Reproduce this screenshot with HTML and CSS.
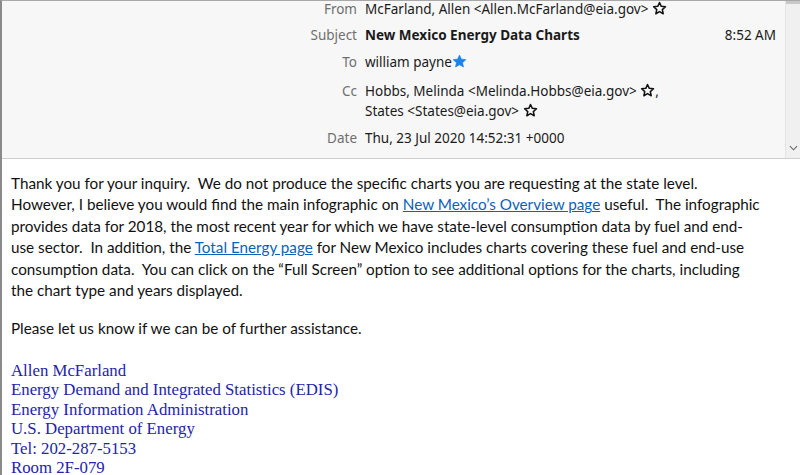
FILE: index.html
```html
<!DOCTYPE html>
<html>
<head>
<meta charset="utf-8">
<link rel="stylesheet" href="styles.css">
</head>
<body>
<div class="frame">
  <header class="head">
    <div class="fields">
      <div class="row r-from"><span class="lbl">From</span><span class="val">McFarland, Allen &lt;Allen.McFarland@eia.gov&gt; <svg class="star" viewBox="0 0 16 16"><path d="M8 1.6l1.9 4.1 4.5.5-3.4 3 1 4.4L8 11.3l-3.9 2.3 1-4.4-3.4-3 4.5-.5z" fill="none" stroke="#111" stroke-width="1.6" stroke-linejoin="round"/></svg></span></div>
      <div class="row r-subj"><span class="lbl">Subject</span><span class="val subj">New Mexico Energy Data Charts</span><span class="time">8:52 AM</span></div>
      <div class="row r-to"><span class="lbl">To</span><span class="val">william payne<svg class="star" viewBox="0 0 16 16"><path d="M8 1.2l2 4.3 4.7.5-3.5 3.2 1 4.6L8 11.4l-4.2 2.4 1-4.6L1.3 6l4.7-.5z" fill="#1a82e8" stroke="#1a82e8" stroke-width="0.8" stroke-linejoin="round"/></svg></span></div>
      <div class="row r-cc"><span class="lbl">Cc</span><span class="val">Hobbs, Melinda &lt;Melinda.Hobbs@eia.gov&gt; <svg class="star" viewBox="0 0 16 16"><path d="M8 1.6l1.9 4.1 4.5.5-3.4 3 1 4.4L8 11.3l-3.9 2.3 1-4.4-3.4-3 4.5-.5z" fill="none" stroke="#111" stroke-width="1.6" stroke-linejoin="round"/></svg>,<br>States &lt;States@eia.gov&gt; <svg class="star" viewBox="0 0 16 16"><path d="M8 1.6l1.9 4.1 4.5.5-3.4 3 1 4.4L8 11.3l-3.9 2.3 1-4.4-3.4-3 4.5-.5z" fill="none" stroke="#111" stroke-width="1.6" stroke-linejoin="round"/></svg></span></div>
      <div class="row r-date"><span class="lbl">Date</span><span class="val">Thu, 23 Jul 2020 14:52:31 +0000</span></div>
    </div>
    <div class="scroll">
      <div class="thumb"></div>
      <svg class="chev" viewBox="0 0 10 6"><path d="M1 1l4 4 4-4" fill="none" stroke="#666" stroke-width="1.2"/></svg>
    </div>
  </header>
  <main class="body">
    <p class="msg">Thank you for your inquiry.&nbsp; We do not produce the specific charts you are requesting at the state level.<br>However, I believe you would find the main infographic on <a href="#">New Mexico’s Overview page</a> useful.&nbsp; The infographic<br>provides data for 2018, the most recent year for which we have state-level consumption data by fuel and end-<br>use sector.&nbsp; In addition, the <a href="#">Total Energy page</a> for New Mexico includes charts covering these fuel and end-use<br>consumption data.&nbsp; You can click on the “Full Screen” option to see additional options for the charts, including<br>the chart type and years displayed.</p>
    <p class="msg msg2">Please let us know if we can be of further assistance.</p>
    <div class="sig">
      <div>Allen McFarland</div>
      <div>Energy Demand and Integrated Statistics (EDIS)</div>
      <div>Energy Information Administration</div>
      <div>U.S. Department of Energy</div>
      <div>Tel: 202-287-5153</div>
      <div>Room 2F-079</div>
    </div>
  </main>
</div>
</body>
</html>
```
FILE: styles.css
```css
html, body {
  margin: 0;
  padding: 0;
  background: #fff;
}
body {
  width: 800px;
  height: 475px;
  overflow: hidden;
}
.frame {
  border-left: 2px solid #8a8a8a;
  border-top: 1px solid #a8a8a8;
  height: 475px;
  box-sizing: border-box;
}
.head {
  display: flex;
  background: #f7f7f7;
  border-bottom: 1px solid #cfcfcf;
  height: 158px;
  box-sizing: border-box;
}
.fields {
  flex: 1;
  font-family: "Noto Sans", "Open Sans", sans-serif;
  font-size: 13.5px;
  color: #1a1a1a;
  margin-top: -2px;
}
.row {
  display: flex;
  align-items: flex-start;
  line-height: 20px;
}
.lbl {
  width: 363px;
  text-align: right;
  color: #6f6f6f;
  padding-right: 8px;
  box-sizing: border-box;
  flex: none;
}
.val {
  flex: 1;
}
.subj {
  font-weight: bold;
}
.time {
  width: 80px;
  text-align: right;
  padding-right: 9px;
}
.r-subj { margin-top: 6px; }
.r-to { margin-top: 7px; }
.r-cc { margin-top: 9px; }
.r-date { margin-top: 7px; }
.star {
  width: 15px;
  height: 15px;
  vertical-align: -2px;
}
.scroll {
  width: 14px;
  flex: none;
  background: #f0f0f0;
  border-left: 1px solid #e4e4e4;
  position: relative;
}
.thumb {
  height: 3px;
  background: #c8c8c8;
}
.chev {
  position: absolute;
  left: 3px;
  bottom: 7px;
  width: 9px;
  height: 6px;
}
.body {
  padding: 14px 10px 0 9px;
  font-family: "Lato", "Open Sans", sans-serif;
  font-size: 15.25px;
  color: #111;
}
.msg {
  margin: 0 0 17px;
  line-height: 21.4px;
}
.msg2 {
  margin-bottom: 21px;
}
.msg a {
  color: #0b62b8;
  text-decoration: underline;
}
.sig {
  font-family: "Liberation Serif", serif;
  font-size: 16.8px;
  line-height: 19.5px;
  color: #2424a8;
}
```
